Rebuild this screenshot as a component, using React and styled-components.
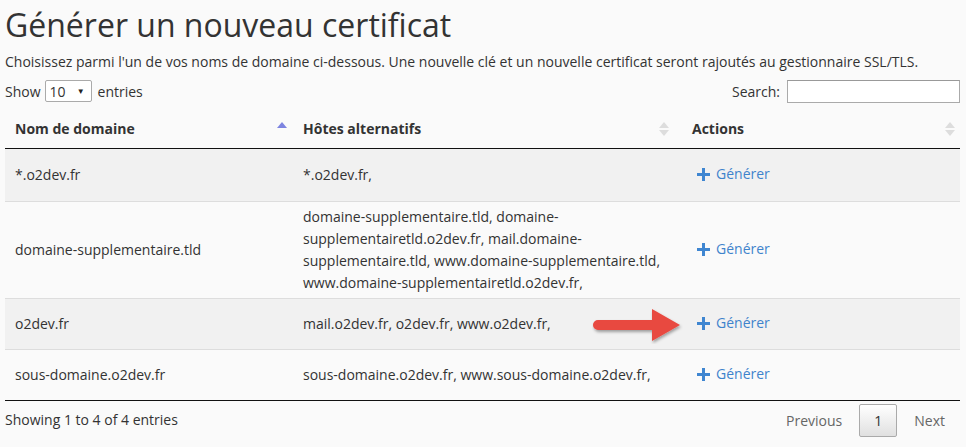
import React from 'react';
import styled, { createGlobalStyle } from 'styled-components';

const GlobalStyle = createGlobalStyle`
  html, body {
    margin: 0;
    padding: 0;
    background: #fafafa;
  }
  body {
    font-family: "Open Sans", "Liberation Sans", Arial, sans-serif;
    color: #333;
    font-size: 14px;
  }
`;

const Page = styled.div`
  padding: 0 6px 0 5px;
  width: 955px;
`;

const Title = styled.h1`
  margin: 0;
  padding-top: 4px;
  font-size: 32px;
  font-weight: 400;
  line-height: 42px;
  color: #333;
`;

const Intro = styled.p`
  margin: 6px 0 0;
  font-size: 14px;
  line-height: 20px;
`;

const Toolbar = styled.div`
  display: flex;
  justify-content: space-between;
  align-items: center;
  margin-top: 7px;
  height: 24px;
`;

const Label = styled.label`
  display: flex;
  align-items: center;
  gap: 4px;
  font-size: 14px;
`;

const SelectBox = styled.div`
  position: relative;
  width: 47px;
  height: 22px;
  border: 1px solid #aaa;
  border-radius: 2px;
  background: #fff;
  display: flex;
  align-items: center;
  padding-left: 4px;
  margin-right: 2px;
  box-sizing: border-box;
  font-size: 14px;

  &::after {
    content: '▼';
    position: absolute;
    right: 6px;
    top: 4px;
    font-size: 8px;
    color: #222;
  }
`;

const SearchInput = styled.input`
  width: 173px;
  height: 23px;
  box-sizing: border-box;
  border: 1px solid #aaa;
  border-top-color: #999;
  background: #fff;
  margin-left: 3px;
`;

const Table = styled.table`
  width: 100%;
  border-collapse: collapse;
  margin-top: 6px;
  border-bottom: 1px solid #111;
`;

const Th = styled.th`
  position: relative;
  text-align: left;
  font-weight: 700;
  font-size: 14px;
  padding: 10px 10px;
  height: 19px;
  border-bottom: 1px solid #111;
  width: ${({ w }) => w}px;
`;

const SortIcon = styled.span`
  position: absolute;
  right: ${({ r }) => r}px;
  top: 13px;
  display: flex;
  flex-direction: column;
  gap: 2px;
`;

const Tri = styled.i`
  display: block;
  width: 0;
  height: 0;
  border-left: 5px solid transparent;
  border-right: 5px solid transparent;
  ${({ up, c }) =>
    up ? `border-bottom: 6px solid ${c};` : `border-top: 6px solid ${c};`}
`;

const Row = styled.tr`
  background: ${({ odd }) => (odd ? '#f1f1f1' : '#fafafa')};
  border-top: 1px solid #ddd;
  &:first-child {
    border-top: none;
  }
  &:first-child td {
    height: 44px;
  }
`;

const Td = styled.td`
  padding: 4px 10px;
  height: 42px;
  line-height: 22px;
  font-size: 14px;
  vertical-align: middle;
`;

const ActionLink = styled.a`
  display: inline-flex;
  align-items: center;
  gap: 6px;
  color: #3f83cc;
  text-decoration: none;
  font-size: 14px;
  padding-left: 5px;
`;

const ActionCell = styled(Td)`
  position: relative;
`;

const Pointer = styled.svg`
  position: absolute;
  left: -90px;
  top: 7px;
`;

const Footer = styled.div`
  display: flex;
  justify-content: space-between;
  align-items: center;
  margin-top: 3px;
`;

const Info = styled.div`
  font-size: 14px;
  margin-top: -3px;
`;

const Pager = styled.div`
  display: flex;
  align-items: center;
`;

const PageBtn = styled.span`
  display: inline-flex;
  align-items: center;
  justify-content: center;
  padding: 0 ${({ current }) => (current ? '14px' : '17px')};
  height: ${({ current }) => (current ? '31px' : '33px')};
  font-size: 14px;
  color: ${({ current }) => (current ? '#333' : '#666')};
  border: ${({ current }) => (current ? '1px solid #aaa' : 'none')};
  border-radius: 2px;
  background: ${({ current }) =>
    current ? 'linear-gradient(#fff, #e0e0e0)' : 'transparent'};

  &:last-child {
    padding-right: 15px;
  }
`;

const Plus = () => (
  <svg width="13" height="13" viewBox="0 0 13 13">
    <path d="M5 0h3v5h5v3H8v5H5V8H0V5h5z" fill="#3f86d1" />
  </svg>
);

const rows = [
  { name: '*.o2dev.fr', hosts: ['*.o2dev.fr,'] },
  {
    name: 'domaine-supplementaire.tld',
    hosts: [
      'domaine-supplementaire.tld, domaine-',
      'supplementairetld.o2dev.fr, mail.domaine-',
      'supplementaire.tld, www.domaine-supplementaire.tld,',
      'www.domaine-supplementairetld.o2dev.fr,',
    ],
  },
  { name: 'o2dev.fr', hosts: ['mail.o2dev.fr, o2dev.fr, www.o2dev.fr,'], arrow: true },
  {
    name: 'sous-domaine.o2dev.fr',
    hosts: ['sous-domaine.o2dev.fr, www.sous-domaine.o2dev.fr,'],
  },
];

export default function App() {
  return (
    <>
      <GlobalStyle />
      <Page>
        <Title>Générer un nouveau certificat</Title>
        <Intro>
          Choisissez parmi l'un de vos noms de domaine ci-dessous. Une nouvelle clé et un
          nouvelle certificat seront rajoutés au gestionnaire SSL/TLS.
        </Intro>
        <Toolbar>
          <Label>
            Show <SelectBox>10</SelectBox> entries
          </Label>
          <Label>
            Search: <SearchInput type="text" />
          </Label>
        </Toolbar>
        <Table>
          <thead>
            <tr>
              <Th w={268}>
                Nom de domaine
                <SortIcon r={6}>
                  <Tri up c="#7d84e0" />
                </SortIcon>
              </Th>
              <Th w={369}>
                Hôtes alternatifs
                <SortIcon r={13}>
                  <Tri up c="#ddd" />
                  <Tri c="#ddd" />
                </SortIcon>
              </Th>
              <Th w={258}>
                Actions
                <SortIcon r={5}>
                  <Tri up c="#ddd" />
                  <Tri c="#ddd" />
                </SortIcon>
              </Th>
            </tr>
          </thead>
          <tbody>
            {rows.map((r, i) => (
              <Row key={r.name} odd={i % 2 === 0}>
                <Td>{r.name}</Td>
                <Td>
                  {r.hosts.map((h, j) => (
                    <div key={j}>{h}</div>
                  ))}
                </Td>
                <ActionCell>
                  {r.arrow && (
                    <Pointer width="92" height="38" viewBox="0 0 92 38">
                      <defs>
                        <filter id="sh" x="-10%" y="-20%" width="130%" height="150%">
                          <feDropShadow dx="1" dy="2" stdDeviation="1.5" floodOpacity="0.35" />
                        </filter>
                      </defs>
                      <path
                        d="M6 14 H60 V3 L88 19 L60 35 V24 H6 a5 5 0 0 1 0 -10 z"
                        fill="#e8483f"
                        filter="url(#sh)"
                      />
                    </Pointer>
                  )}
                  <ActionLink href="#">
                    <Plus />
                    Générer
                  </ActionLink>
                </ActionCell>
              </Row>
            ))}
          </tbody>
        </Table>
        <Footer>
          <Info>Showing 1 to 4 of 4 entries</Info>
          <Pager>
            <PageBtn>Previous</PageBtn>
            <PageBtn current>1</PageBtn>
            <PageBtn>Next</PageBtn>
          </Pager>
        </Footer>
      </Page>
    </>
  );
}
